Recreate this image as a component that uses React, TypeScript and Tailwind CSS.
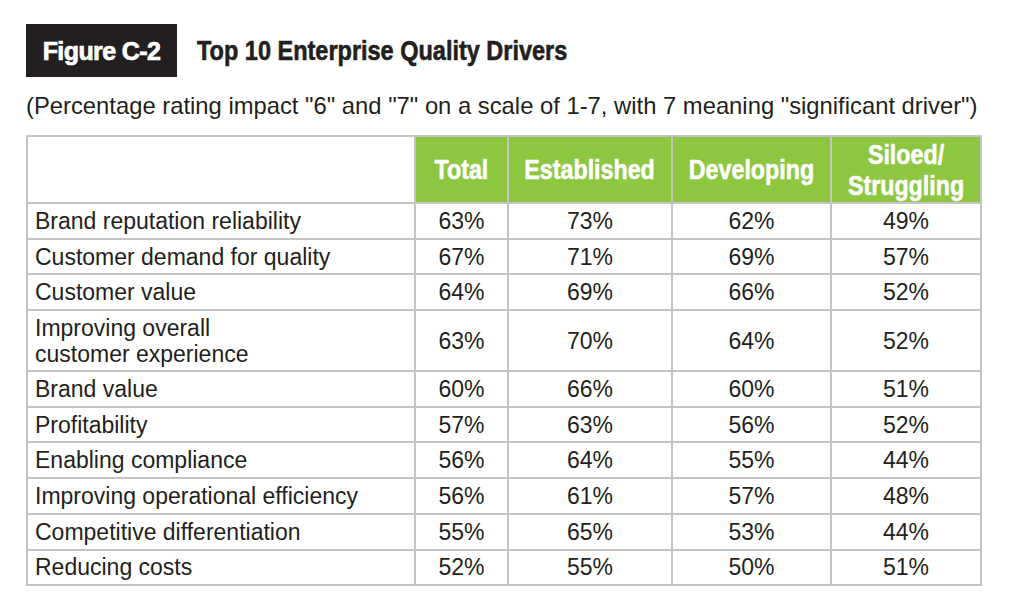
import React from "react";

const rows: { label: React.ReactNode; vals: string[]; tall?: boolean }[] = [
  { label: "Brand reputation reliability", vals: ["63%", "73%", "62%", "49%"] },
  { label: "Customer demand for quality", vals: ["67%", "71%", "69%", "57%"] },
  { label: "Customer value", vals: ["64%", "69%", "66%", "52%"] },
  {
    label: (
      <>
        Improving overall
        <br />
        customer experience
      </>
    ),
    vals: ["63%", "70%", "64%", "52%"],
    tall: true,
  },
  { label: "Brand value", vals: ["60%", "66%", "60%", "51%"] },
  { label: "Profitability", vals: ["57%", "63%", "56%", "52%"] },
  { label: "Enabling compliance", vals: ["56%", "64%", "55%", "44%"] },
  { label: "Improving operational efficiency", vals: ["56%", "61%", "57%", "48%"] },
  { label: "Competitive differentiation", vals: ["55%", "65%", "53%", "44%"] },
  { label: "Reducing costs", vals: ["52%", "55%", "50%", "51%"] },
];

const sans = { fontFamily: '"Liberation Sans", Arial, sans-serif' };

function Head({ children }: { children: React.ReactNode }) {
  return (
    <th className="border-2 border-[#c4c4c4] bg-[#8dc63f] text-white font-bold text-[28px] leading-[31px] text-center align-middle p-0">
      <span className="inline-block scale-x-[0.83] origin-center whitespace-nowrap [-webkit-text-stroke:0.6px_white]">
        {children}
      </span>
    </th>
  );
}

export default function App() {
  return (
    <div className="w-[1024px] h-[607px] bg-white pl-[26px] pt-[24px] text-[#231f20]" style={sans}>
      <div className="flex items-center h-[53px]">
        <div className="w-[151px] h-[53px] bg-[#231f20] flex items-center justify-center">
          <span className="text-white font-bold text-[25px] tracking-[-0.6px] leading-none pt-[2px] [-webkit-text-stroke:0.7px_white]">
            Figure C-2
          </span>
        </div>
        <div className="ml-[20px] font-bold text-[27px] leading-none text-[#231f20] pt-[1px]">
          <span className="inline-block scale-x-[0.87] origin-left whitespace-nowrap [-webkit-text-stroke:0.6px_#231f20]">
            Top 10 Enterprise Quality Drivers
          </span>
        </div>
      </div>
      <p className="mt-[13px] text-[23.8px] leading-[32px] text-[#231f20]">
        (Percentage rating impact "6" and "7" on a scale of 1-7, with 7 meaning "significant driver")
      </p>
      <table className="mt-[13px] border-collapse border-2 border-[#c4c4c4] w-[954px] table-fixed">
        <colgroup>
          <col className="w-[388px]" />
          <col className="w-[93px]" />
          <col className="w-[164px]" />
          <col className="w-[159px]" />
          <col className="w-[150px]" />
        </colgroup>
        <thead>
          <tr className="h-[67px]">
            <th className="border-2 border-[#c4c4c4] bg-white"></th>
            <Head>Total</Head>
            <Head>Established</Head>
            <Head>Developing</Head>
            <Head>
              Siloed/
              <br />
              Struggling
            </Head>
          </tr>
        </thead>
        <tbody>
          {rows.map((r, i) => (
            <tr key={i} className={r.tall ? "h-[61px]" : "h-[35.7px]"}>
              <td className="border-2 border-[#c4c4c4] pl-[7px] text-[23px] leading-[26px] align-middle">{r.label}</td>
              {r.vals.map((v, j) => (
                <td key={j} className="border-2 border-[#c4c4c4] text-center text-[23px] leading-[26px] align-middle">
                  {v}
                </td>
              ))}
            </tr>
          ))}
        </tbody>
      </table>
    </div>
  );
}
